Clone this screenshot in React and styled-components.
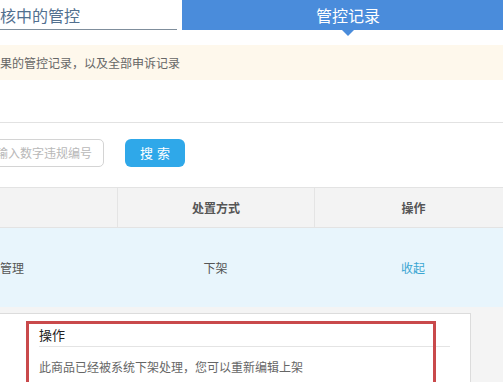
import React from "react";
import styled, { createGlobalStyle } from "styled-components";

const Global = createGlobalStyle`
  html, body { margin: 0; padding: 0; background: #fff; overflow: hidden; }
  body { font-family: "Liberation Sans", "Noto Sans CJK SC", sans-serif; font-size: 12px; color: #555; }
`;

const Page = styled.div`
  width: 503px;
  height: 382px;
  overflow: hidden;
  display: flex;
  flex-direction: column;
  & > * { flex-shrink: 0; }
`;

const Tabs = styled.div`
  display: flex;
  height: 30px;
  width: 520px;
`;

const Tab = styled.div`
  position: relative;
  height: 30px;
  box-sizing: border-box;
  display: flex;
  align-items: center;
  font-size: 16px;
  flex-shrink: 0;
  ${(p) =>
    p.$active
      ? `
    width: 332px;
    margin-left: 5px;
    background: #4a8cdb;
    color: #fff;
    justify-content: center;
    &::after {
      content: "";
      position: absolute;
      left: 50%;
      bottom: -6px;
      margin-left: -6px;
      border-left: 6px solid transparent;
      border-right: 6px solid transparent;
      border-top: 6px solid #4a8cdb;
    }
  `
      : `
    width: 177px;
    border-bottom: 1px solid #7f8e9c;
    color: #52708f;
    justify-content: flex-start;
    text-indent: -16px;
  `}
`;

const Notice = styled.div`
  margin-top: 15px;
  height: 35px;
  background: #fef8ec;
  color: #666;
  font-size: 12px;
  display: flex;
  align-items: center;
  white-space: nowrap;
  overflow: hidden;
`;

const NoticeText = styled.span`
  margin-left: -12px;
`;

const Divider = styled.div`
  margin-top: 42px;
  border-top: 1px solid #e2e2e2;
`;

const SearchRow = styled.div`
  display: flex;
  align-items: center;
  gap: 21px;
  margin-top: 15px;
  margin-left: -60px;
  height: 29px;
`;

const Input = styled.div`
  width: 164px;
  height: 28px;
  box-sizing: border-box;
  border: 1px solid #d4d4d4;
  border-radius: 5px;
  display: flex;
  align-items: center;
  justify-content: flex-end;
  padding-right: 11px;
  color: #b8b8b8;
  font-size: 12px;
`;

const Button = styled.div`
  width: 60px;
  height: 28px;
  border-radius: 6px;
  background: #2fa8e9;
  color: #fff;
  font-size: 13px;
  display: flex;
  align-items: center;
  justify-content: center;
  letter-spacing: 4px;
  text-indent: 4px;
`;

const Table = styled.div`
  margin-top: 20px;
  width: 512px;
  border-top: 1px solid #e3e3e3;
`;

const Row = styled.div`
  display: grid;
  grid-template-columns: 117px 197px 198px;
  height: ${(p) => p.$h}px;
  background: ${(p) => p.$bg};
  border-bottom: ${(p) => (p.$head ? "1px solid #e3e3e3" : "none")};
  box-sizing: border-box;
`;

const Cell = styled.div`
  display: flex;
  align-items: center;
  justify-content: ${(p) => (p.$left ? "flex-start" : "center")};
  border-left: ${(p) => (p.$sep ? "1px solid #e4e4e4" : "none")};
  font-size: 12px;
  font-weight: ${(p) => (p.$bold ? "bold" : "normal")};
  color: ${(p) => p.$color || "#555"};
  white-space: nowrap;
  overflow: hidden;
`;

const Lower = styled.div`
  flex: 1 0 auto;
  background: #f4f4f4;
  padding-top: 6px;
`;

const Panel = styled.div`
  position: relative;
  width: 491px;
  margin-left: -20px;
  height: 100px;
  background: #fff;
  border: 1px solid #dcdcdc;
  box-sizing: border-box;
  padding: 8px 20px 0 58px;
`;

const PanelHead = styled.div`
  height: 24px;
  display: flex;
  align-items: center;
  font-size: 13px;
  color: #222;
  border-bottom: 1px solid #e4e4e4;
`;

const PanelText = styled.div`
  margin-top: 11px;
  font-size: 12px;
  color: #666;
`;

const Highlight = styled.div`
  position: absolute;
  left: 45px;
  top: 7px;
  width: 410px;
  height: 100px;
  border: 3px solid #c9494b;
  box-sizing: border-box;
`;

export default function App() {
  return (
    <Page>
      <Global />
      <Tabs>
        <Tab>审核中的管控</Tab>
        <Tab $active>管控记录</Tab>
      </Tabs>
      <Notice>
        <NoticeText>结果的管控记录，以及全部申诉记录</NoticeText>
      </Notice>
      <Divider />
      <SearchRow>
        <Input>输入数字违规编号</Input>
        <Button>搜索</Button>
      </SearchRow>
      <Table>
        <Row $h={40} $bg="#f3f3f3" $head>
          <Cell />
          <Cell $sep $bold>处置方式</Cell>
          <Cell $sep $bold>操作</Cell>
        </Row>
        <Row $h={79} $bg="#e8f5fc">
          <Cell $left>管理</Cell>
          <Cell>下架</Cell>
          <Cell $color="#3aa6d2">收起</Cell>
        </Row>
      </Table>
      <Lower>
        <Panel>
          <PanelHead>操作</PanelHead>
          <PanelText>此商品已经被系统下架处理，您可以重新编辑上架</PanelText>
          <Highlight />
        </Panel>
      </Lower>
    </Page>
  );
}
